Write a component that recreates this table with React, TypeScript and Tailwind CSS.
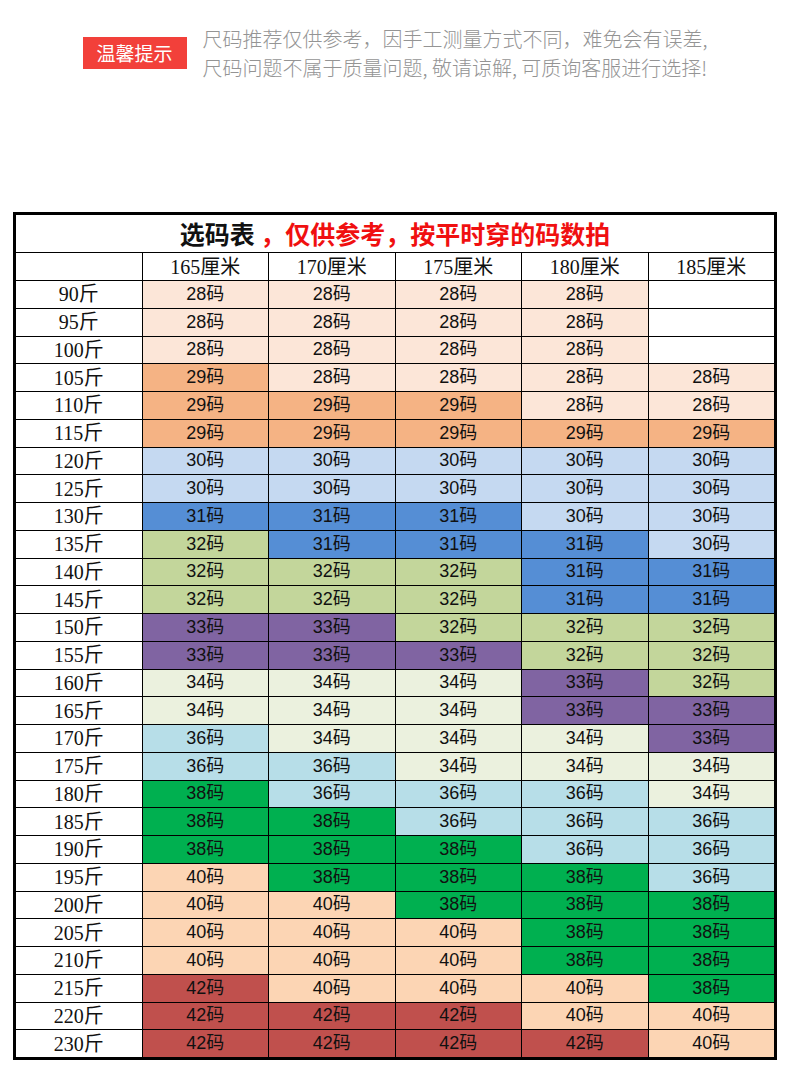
import React from "react";

const heights = ["165厘米", "170厘米", "175厘米", "180厘米", "185厘米"];

const rows: [string, (number | null)[]][] = [
  ["90斤", [28, 28, 28, 28, null]],
  ["95斤", [28, 28, 28, 28, null]],
  ["100斤", [28, 28, 28, 28, null]],
  ["105斤", [29, 28, 28, 28, 28]],
  ["110斤", [29, 29, 29, 28, 28]],
  ["115斤", [29, 29, 29, 29, 29]],
  ["120斤", [30, 30, 30, 30, 30]],
  ["125斤", [30, 30, 30, 30, 30]],
  ["130斤", [31, 31, 31, 30, 30]],
  ["135斤", [32, 31, 31, 31, 30]],
  ["140斤", [32, 32, 32, 31, 31]],
  ["145斤", [32, 32, 32, 31, 31]],
  ["150斤", [33, 33, 32, 32, 32]],
  ["155斤", [33, 33, 33, 32, 32]],
  ["160斤", [34, 34, 34, 33, 32]],
  ["165斤", [34, 34, 34, 33, 33]],
  ["170斤", [36, 34, 34, 34, 33]],
  ["175斤", [36, 36, 34, 34, 34]],
  ["180斤", [38, 36, 36, 36, 34]],
  ["185斤", [38, 38, 36, 36, 36]],
  ["190斤", [38, 38, 38, 36, 36]],
  ["195斤", [40, 38, 38, 38, 36]],
  ["200斤", [40, 40, 38, 38, 38]],
  ["205斤", [40, 40, 40, 38, 38]],
  ["210斤", [40, 40, 40, 38, 38]],
  ["215斤", [42, 40, 40, 40, 38]],
  ["220斤", [42, 42, 42, 40, 40]],
  ["230斤", [42, 42, 42, 42, 40]],
];

const bg: Record<number, string> = {
  28: "bg-[#FCE6D8]",
  29: "bg-[#F5B384]",
  30: "bg-[#C5D9F1]",
  31: "bg-[#558ED5]",
  32: "bg-[#C3D69B]",
  33: "bg-[#8064A2]",
  34: "bg-[#EBF1DE]",
  36: "bg-[#B7DEE8]",
  38: "bg-[#00B050]",
  40: "bg-[#FCD5B4]",
  42: "bg-[#C0504D]",
};

const labelFont = {
  fontFamily: '"Liberation Serif", "Noto Sans CJK SC", serif',
};

export default function App() {
  return (
    <div className="w-[790px] h-[1078px] bg-white">
      <div className="pt-[24px] flex justify-center items-center gap-4">
        <div className="w-[104px] h-[32px] bg-[#F2403A] text-white text-[19px] flex items-center justify-center font-['Noto_Sans_CJK_SC',sans-serif]">
          温馨提示
        </div>
        <div className="text-[#949494] text-[20px] leading-[29px] font-['Noto_Sans_CJK_SC',sans-serif] font-light">
          <div>尺码推荐仅供参考，因手工测量方式不同，难免会有误差,</div>
          <div>尺码问题不属于质量问题, 敬请谅解, 可质询客服进行选择!</div>
        </div>
      </div>

      <div className="mt-[130px] px-[13px]">
        <div className="border-[3px] border-black bg-black">
          <div className="grid grid-cols-6 gap-px h-[842px] grid-rows-[37px_27px_repeat(28,minmax(0,1fr))]">
            <div className="col-span-6 bg-white flex items-center justify-center text-[25px] font-bold font-['Noto_Sans_CJK_SC',sans-serif]">
              <span className="text-[#111]">选码表</span>
              <span className="text-[#F01010]">&nbsp;，仅供参考，按平时穿的码数拍</span>
            </div>
            <div className="bg-white" />
            {heights.map((h) => (
              <div
                key={h}
                className="bg-white flex items-center justify-center text-[20px] text-[#111]"
                style={labelFont}
              >
                {h}
              </div>
            ))}
            {rows.map(([w, vals]) => (
              <React.Fragment key={w}>
                <div
                  className="bg-white flex items-center justify-center text-[20px] text-[#111]"
                  style={labelFont}
                >
                  {w}
                </div>
                {vals.map((v, i) => (
                  <div
                    key={i}
                    className={`${v ? bg[v] : "bg-white"} flex items-center justify-center text-[18px] text-[#111] font-['Liberation_Sans','Noto_Sans_CJK_SC',sans-serif]`}
                  >
                    {v ? `${v}码` : ""}
                  </div>
                ))}
              </React.Fragment>
            ))}
          </div>
        </div>
      </div>
    </div>
  );
}
